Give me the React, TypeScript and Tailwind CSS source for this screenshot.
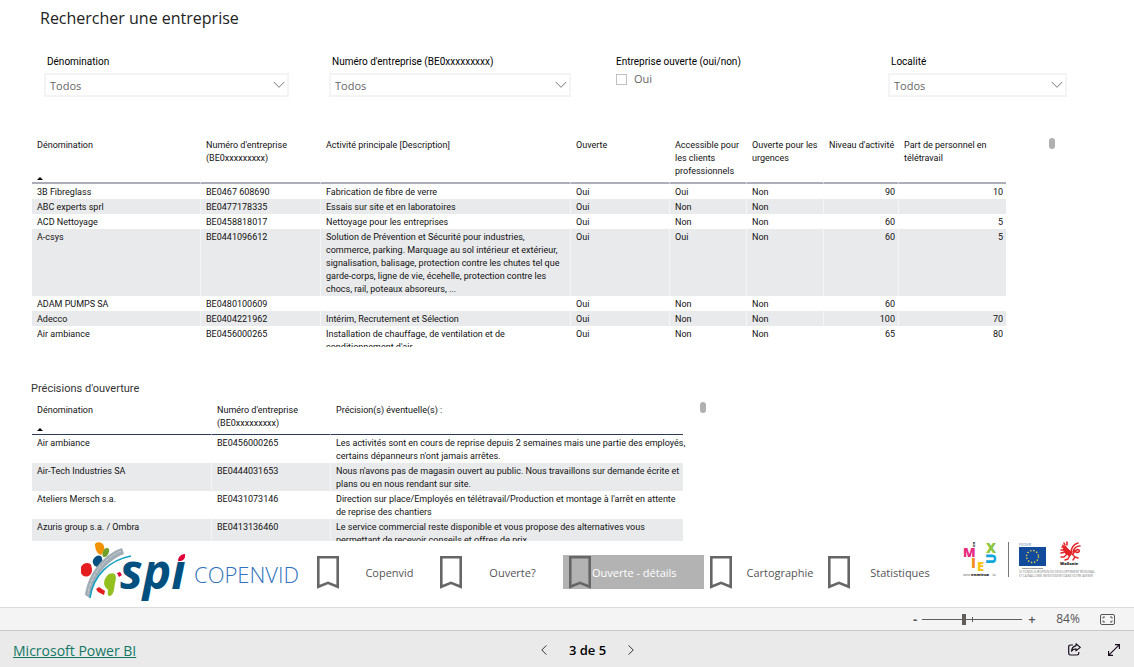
import { useState } from 'react'
import type { ReactNode } from 'react'

interface Company {
  name: string
  number: string
  activity: string
  open: string
  accessible: string
  urgent: string
  level: string
  telework: string
}

const companies: Company[] = [
  { name: '3B Fibreglass', number: 'BE0467 608690', activity: 'Fabrication de fibre de verre', open: 'Oui', accessible: 'Oui', urgent: 'Non', level: '90', telework: '10' },
  { name: 'ABC experts sprl', number: 'BE0477178335', activity: 'Essais sur site et en laboratoires', open: 'Oui', accessible: 'Non', urgent: 'Non', level: '', telework: '' },
  { name: 'ACD Nettoyage', number: 'BE0458818017', activity: 'Nettoyage pour les entreprises', open: 'Oui', accessible: 'Non', urgent: 'Non', level: '60', telework: '5' },
  { name: 'A-csys', number: 'BE0441096612', activity: 'Solution de Prévention et Sécurité pour industries, commerce, parking. Marquage au sol intérieur et extérieur, signalisation, balisage, protection contre les chutes tel que garde-corps, ligne de vie, écehelle, protection contre les chocs, rail, poteaux absoreurs, ...', open: 'Oui', accessible: 'Oui', urgent: 'Non', level: '60', telework: '5' },
  { name: 'ADAM PUMPS SA', number: 'BE0480100609', activity: '', open: 'Oui', accessible: 'Non', urgent: 'Non', level: '60', telework: '' },
  { name: 'Adecco', number: 'BE0404221962', activity: 'Intérim, Recrutement et Sélection', open: 'Oui', accessible: 'Non', urgent: 'Non', level: '100', telework: '70' },
  { name: 'Air ambiance', number: 'BE0456000265', activity: "Installation de chauffage, de ventilation et de conditionnement d'air", open: 'Oui', accessible: 'Non', urgent: 'Non', level: '65', telework: '80' },
]

const details = [
  { name: 'Air ambiance', number: 'BE0456000265', text: "Les activités sont en cours de reprise depuis 2 semaines mais une partie des employés, certains dépanneurs n'ont jamais arrêtes." },
  { name: 'Air-Tech Industries SA', number: 'BE0444031653', text: "Nous n'avons pas de magasin ouvert au public. Nous travaillons sur demande écrite et plans ou en nous rendant sur site." },
  { name: 'Ateliers Mersch s.a.', number: 'BE0431073146', text: "Direction sur place/Employés en télétravail/Production et montage à l'arrêt en attente de reprise des chantiers" },
  { name: 'Azuris group s.a. / Ombra', number: 'BE0413136460', text: 'Le service commercial reste disponible et vous propose des alternatives vous permettant de recevoir conseils et offres de prix.' },
]

function SelectFilter({ id, label }: { id: string; label: string }) {
  return (
    <div className="flex flex-col gap-[3px]">
      <label htmlFor={id} className="pl-[3px] font-[Roboto,sans-serif] text-[10px] leading-4 text-black">{label}</label>
      <div className="relative">
        <select id={id} className="block h-6 w-full appearance-none rounded-none border-2 border-[#f4f4f4] bg-white pt-[2px] pl-1 text-[11px] leading-4 text-[#666]">
          <option>Todos</option>
        </select>
        <svg viewBox="0 0 12 8" className="pointer-events-none absolute top-2 right-1 h-2 w-3" fill="none" stroke="#777">
          <path d="M0.8 1 L6 6.3 L11.2 1" />
        </svg>
      </div>
    </div>
  )
}

function HeadCell({ children, sorted, tone }: { children: ReactNode; sorted?: boolean; tone: string }) {
  return (
    <th scope="col" className={`border-r border-r-white pt-[2px] pl-[5px] text-left align-top font-normal last:border-r-0 last:pr-3 ${tone}`}>
      {children}
      {sorted && (
        <svg viewBox="0 0 6 3" className="absolute bottom-1 left-[5px] h-[3px] w-[6px]">
          <path d="M0 3 L3 0 L6 3 Z" fill="#000" />
        </svg>
      )}
    </th>
  )
}

function Cell({ children, right }: { children: ReactNode; right?: boolean }) {
  return (
    <td className={`border-r border-r-white/50 pt-[2px] align-top last:border-r-0 ${right ? 'pr-[3px] text-right' : 'px-[5px]'}`}>
      {children}
    </td>
  )
}

function ScrollThumb() {
  return <div className="h-[11px] w-[6px] shrink-0 rounded-full bg-[#b0b0b0]" />
}

function Bookmark() {
  return (
    <svg viewBox="0 0 22 33" className="h-[33px] w-[22px] shrink-0" fill="none" stroke="#666" strokeWidth="2.6">
      <path d="M1.3 1.3 H20.7 V30.8 L11 26.8 L1.3 30.8 Z" />
    </svg>
  )
}

function SpiLogo() {
  return (
    <svg viewBox="0 0 108 62" className="h-[62px] w-[108px] shrink-0" role="img" aria-label="spi">
      <path d="M15 3 C17 0 23 1 24 5 C25 9 23 12 21 14 C18 13 15 10 15 3 Z" fill="#f39200" />
      <path d="M23 11 C24 7 27 6 29 8 C30 11 27 16 25 16 C22 16 22 14 23 11 Z" fill="#6fa02c" />
      <path d="M13 19 C15 14 21 13 22 17 C23 21 20 25 17 26 C14 25 12 22 13 19 Z" fill="#004f80" />
      <path d="M1 26 C3 21 10 21 11 24 C12 27 13 31 10 34 C6 37 2 35 1 32 Z" fill="#e41e20" />
      <path d="M42 7 C24 13 8 32 5 54 L10 57 C13 37 25 21 44 13 Z" fill="#a1adb4" />
      <path d="M41 10 C25 17 11 33 8 53" fill="none" stroke="#d3d9dc" strokeWidth="0.8" strokeDasharray="4 1" />
      <path d="M51 15 C30 19 13 34 10 57" fill="none" stroke="#16a0c6" strokeWidth="1.6" />
      <path d="M29 33 C36 30 37 36 35 42 C34 48 34 55 29 55 C26 53 30 49 26 47 C22 42 25 36 29 33 Z" fill="#93c01f" />
      <path d="M37 32 L40 31 L42 34 L39 36 Z" fill="#e2003b" />
      <path d="M16 48 L19 46 L25 50 L24 54 L18 51 Z" fill="#e41e20" />
      <text x="40" y="48" fontFamily="Open Sans" fontStyle="italic" fontWeight="700" fontSize="48" fill="#00507f">spi</text>
      <path d="M90 8 H108 V21 H90 Z" fill="#fff" />
      <path d="M98 20 C98 16 101 13 105 13 C106 17 103 21 98 20 Z" fill="#e2003b" />
    </svg>
  )
}

function PartnerLogos() {
  return (
    <svg viewBox="0 0 140 40" className="h-10 w-[140px] shrink-0" fontFamily="Open Sans" role="img" aria-label="En mieux, FEDER, Wallonie">
      <g fontWeight="800" fontSize="14">
        <text x="0" y="16" fontSize="13" fill="#e72a81">M</text>
        <text x="0" y="0" fontSize="4" fill="#222" transform="translate(12 6) rotate(-90)">en</text>
        <text x="23" y="12" fill="#8dc63f">X</text>
        <text x="8" y="27" fill="#f28c1c">I</text>
        <text x="14" y="30" fontSize="13" fill="#f9c514">E</text>
        <text x="0" y="0" fill="#12a6dc" transform="translate(33 23) rotate(-90)">U</text>
      </g>
      <text x="0" y="35" fontSize="3" fill="#666">www.</text>
      <text x="8" y="35" fontSize="4" fontWeight="800" fill="#222">enmieux</text>
      <text x="29" y="35" fontSize="3" fill="#666">.be</text>
      <path d="M45.5 1 V36" stroke="#777" />
      <text x="56" y="5" fontSize="4" fill="#5a7fb5">FEDER</text>
      <path d="M56 6 H83 V25 H56 Z" fill="#124b9b" />
      <circle cx="69.5" cy="15.5" r="6" fill="none" stroke="#f2d13c" strokeWidth="1.4" strokeDasharray="1.4 1.74" />
      <text x="59" y="28" fontSize="2" fontWeight="700" fill="#333">UNION EUROPÉENNE</text>
      <g fill="none" stroke="#e42528" strokeLinecap="round" strokeLinejoin="round">
        <path d="M100 4 L103 6 L106 9 L109 12 L107 15 L103 13 L101 10 Z" fill="#e42528" />
        <path d="M101 2 L102 4 M104 1 L104 4 M99 6 L103 6 M98 9 L102 9 M98 12 L102 11" strokeWidth="1.6" />
        <path d="M108 12 C108 8 110 3 115 2 M110 11 C111 7 113 5 117 5 M110 13 C112 9 114 8 116 9 C117 11 115 12 113 11" strokeWidth="1.6" />
        <path d="M104 13 L101 16 L98 16 M107 14 L105 18 L102 19 M109 13 L112 16 L110 19 M112 16 L115 17" strokeWidth="1.4" />
      </g>
      <text x="97" y="24" fontSize="4" fontWeight="800" fill="#111">Wallonie</text>
      <g fontSize="3" fill="#777">
        <text x="56" y="32">LE FONDS EUROPÉEN DE DÉVELOPPEMENT RÉGIONAL</text>
        <text x="56" y="36">ET LA WALLONIE INVESTISSENT DANS VOTRE AVENIR</text>
      </g>
    </svg>
  )
}

function Tab({ label, width }: { label: string; width: string }) {
  return (
    <button className={`flex h-[34px] items-center ${width}`}>
      <Bookmark />
      <span className="flex-1 pt-[2px] text-center">{label}</span>
    </button>
  )
}

export default function App() {
  const [zoom, setZoom] = useState(42)

  return (
    <div className="flex min-h-screen flex-col bg-white font-['Open_Sans','Noto_Sans',sans-serif] text-[#111]">
      <main className="flex flex-1 flex-col">
        <h1 className="pt-1 pl-10 text-[16px] leading-7 text-[#222]">Rechercher une entreprise</h1>

        <form className="mt-[22px] grid grid-cols-[245fr_242fr_237fr_179fr] gap-10 pr-[67px] pl-11">
          <SelectFilter id="name" label="Dénomination" />
          <SelectFilter id="number" label="Numéro d'entreprise (BE0xxxxxxxxx)" />
          <fieldset className="pl-[5px]">
            <legend className="font-[Roboto,sans-serif] text-[10px] leading-4 text-black">Entreprise ouverte (oui/non)</legend>
            <label className="flex items-center gap-[7px] pt-px text-[11px] leading-4 text-[#666]">
              <input type="checkbox" className="h-[11px] w-[11px] appearance-none border border-[#c0c0c0] bg-white checked:bg-[#666]" />
              Oui
            </label>
          </fieldset>
          <SelectFilter id="town" label="Localité" />
        </form>

        <section className="mt-10 flex h-[210px] overflow-hidden pr-[79px] pl-8">
          <div className="flex-1">
            <table className="w-full table-fixed border-separate border-spacing-0 font-[Roboto,sans-serif] text-[9px] leading-[13px]">
              <colgroup>
                <col className="w-[169px]" />
                <col className="w-[120px]" />
                <col className="w-[250px]" />
                <col className="w-[99px]" />
                <col className="w-[77px]" />
                <col className="w-[77px]" />
                <col className="w-[75px]" />
                <col className="w-[107px]" />
              </colgroup>
              <thead>
                <tr className="relative h-[47px]">
                  <HeadCell sorted tone="border-b-2 border-b-[#acafb9]">Dénomination</HeadCell>
                  <HeadCell tone="border-b-2 border-b-[#acafb9]">Numéro d'entreprise (BE0xxxxxxxxx)</HeadCell>
                  <HeadCell tone="border-b-2 border-b-[#acafb9]">Activité principale [Description]</HeadCell>
                  <HeadCell tone="border-b-2 border-b-[#acafb9]">Ouverte</HeadCell>
                  <HeadCell tone="border-b-2 border-b-[#acafb9]">Accessible pour les clients professionnels</HeadCell>
                  <HeadCell tone="border-b-2 border-b-[#acafb9]">Ouverte pour les urgences</HeadCell>
                  <HeadCell tone="border-b-2 border-b-[#acafb9]">Niveau d'activité</HeadCell>
                  <HeadCell tone="border-b-2 border-b-[#acafb9]">Part de personnel en télétravail</HeadCell>
                </tr>
              </thead>
              <tbody>
                {companies.map(c => (
                  <tr key={c.number} className="h-[15px] even:bg-[#e9eaec]">
                    <Cell>{c.name}</Cell>
                    <Cell>{c.number}</Cell>
                    <Cell>{c.activity}</Cell>
                    <Cell>{c.open}</Cell>
                    <Cell>{c.accessible}</Cell>
                    <Cell>{c.urgent}</Cell>
                    <Cell right>{c.level}</Cell>
                    <Cell right>{c.telework}</Cell>
                  </tr>
                ))}
              </tbody>
            </table>
          </div>
          <div className="w-[49px] pt-px pl-[43px]">
            <ScrollThumb />
          </div>
        </section>

        <h2 className="mt-[33px] pl-[31px] font-[Roboto,sans-serif] text-[11px] leading-[18px] text-[#333]">Précisions d'ouverture</h2>

        <section className="mt-1 flex h-[139px] overflow-hidden pr-[428px] pl-8">
          <div className="flex-1">
            <table className="w-full table-fixed border-separate border-spacing-0 font-[Roboto,sans-serif] text-[9px] leading-[13px]">
              <colgroup>
                <col className="w-[180px]" />
                <col className="w-[119px]" />
                <col className="w-[352px]" />
              </colgroup>
              <thead>
                <tr className="relative h-[33px]">
                  <HeadCell sorted tone="border-b border-b-[#2f3a55]">Dénomination</HeadCell>
                  <HeadCell tone="border-b border-b-[#2f3a55]">Numéro d'entreprise (BE0xxxxxxxxx)</HeadCell>
                  <HeadCell tone="border-b border-b-[#2f3a55]">Précision(s) éventuelle(s) :</HeadCell>
                </tr>
              </thead>
              <tbody>
                {details.map(d => (
                  <tr key={d.number} className="h-7 even:bg-[#e9eaec]">
                    <Cell>{d.name}</Cell>
                    <Cell>{d.number}</Cell>
                    <td className="pt-[2px] pl-[5px] align-top">
                      <p className="-mr-1">{d.text}</p>
                    </td>
                  </tr>
                ))}
              </tbody>
            </table>
          </div>
          <div className="w-[23px] pl-[17px]">
            <ScrollThumb />
          </div>
        </section>

        <div className="flex h-[66px] items-start pl-20">
          <SpiLogo />
          <span className="w-[129px] pt-[17px] pl-[6px] text-[22px] leading-8 font-light text-[#2f72bd]">COPENVID</span>
          <nav className="flex pt-[14px] text-[11px] leading-4 text-[#555]">
            <Tab label="Copenvid" width="w-[123px]" />
            <Tab label="Ouverte?" width="w-[123px]" />
            <button aria-current="page" className="mr-[6px] flex h-[34px] w-[141px] items-center gap-px bg-[#b3b3b3] pl-[6px] text-white">
              <Bookmark />
              <span className="pt-[2px]">Ouverte - détails</span>
            </button>
            <Tab label="Cartographie" width="w-[118px]" />
            <Tab label="Statistiques" width="w-[122px]" />
          </nav>
          <div className="ml-auto pr-[31px]">
            <PartnerLogos />
          </div>
        </div>
      </main>

      <div className="flex h-[23px] items-center justify-end border-t border-[#ddd] bg-[#f4f4f4] pr-[19px] text-[#555]">
        <button aria-label="Zoom out" className="w-[10px] text-[13px] leading-4 font-bold">-</button>
        <div className="relative mx-[2px] flex h-4 w-[100px] items-center">
          <input
            type="range"
            aria-label="Zoom"
            value={zoom}
            onChange={e => setZoom(Number(e.target.value))}
            className="h-px w-full appearance-none bg-[#605e5c] [&::-webkit-slider-thumb]:h-[11px] [&::-webkit-slider-thumb]:w-1 [&::-webkit-slider-thumb]:appearance-none [&::-webkit-slider-thumb]:bg-[#605e5c]"
          />
          <span className="pointer-events-none absolute top-[6px] left-[50px] h-[5px] w-px bg-[#605e5c]" />
        </div>
        <button aria-label="Zoom in" className="w-4 text-center text-[13px] leading-4 font-semibold">+</button>
        <span className="w-[60px] pr-1 text-center text-[12px] leading-4">84%</span>
        <button aria-label="Fit to page" className="flex w-[15px]">
          <svg viewBox="0 0 15 11" className="h-[11px] w-[15px]" fill="none" stroke="#555">
            <rect x="0.5" y="0.5" width="14" height="10" rx="1.5" />
            <path d="M3 4.5 V3 H5 M10 3 H12 V4.5 M12 6.5 V8 H10 M5 8 H3 V6.5" />
          </svg>
        </button>
      </div>

      <footer className="grid h-[37px] grid-cols-3 items-center border-t border-[#c8c8c8] bg-[#eaeaea] pt-px pr-[14px] pl-[13px]">
        <div>
          <a href="https://powerbi.microsoft.com" className="text-[14px] leading-5 text-[#117865] underline">Microsoft Power BI</a>
        </div>
        <div className="flex items-center justify-center gap-[22px] pl-[42px] text-[13px] leading-5 font-semibold text-black">
          <button aria-label="Previous page">
            <svg viewBox="0 0 6 10" className="h-[10px] w-[6px]" fill="none" stroke="#333"><path d="M5.4 0.4 L0.8 5 L5.4 9.6" /></svg>
          </button>
          3 de 5
          <button aria-label="Next page">
            <svg viewBox="0 0 6 10" className="h-[10px] w-[6px]" fill="none" stroke="#333"><path d="M0.6 0.4 L5.2 5 L0.6 9.6" /></svg>
          </button>
        </div>
        <div className="flex items-center justify-end gap-[27px]">
          <button aria-label="Share">
            <svg viewBox="0 0 13 13" className="h-[13px] w-[13px]" fill="none" stroke="#1a1020" strokeWidth="1.2" strokeLinejoin="round">
              <path d="M5 2 H2.5 C1.3 2 0.7 2.7 0.7 3.7 V10.3 C0.7 11.5 1.4 12 2.5 12 H9 C10.2 12 10.8 11.4 10.8 10.3 V9" />
              <path d="M8 0.8 L12.3 4.4 L8 7.8 V5.9 C5.8 5.9 4.6 6.5 3.5 8.2 C3.8 5 5.4 3.1 8 2.8 Z" />
            </svg>
          </button>
          <button aria-label="Full screen">
            <svg viewBox="0 0 12 12" className="h-3 w-3" fill="none" stroke="#1a1020" strokeWidth="1.2">
              <path d="M0.6 11.4 L11.4 0.6 M7 0.6 H11.4 V5 M0.6 7 V11.4 H5" />
            </svg>
          </button>
        </div>
      </footer>
    </div>
  )
}
